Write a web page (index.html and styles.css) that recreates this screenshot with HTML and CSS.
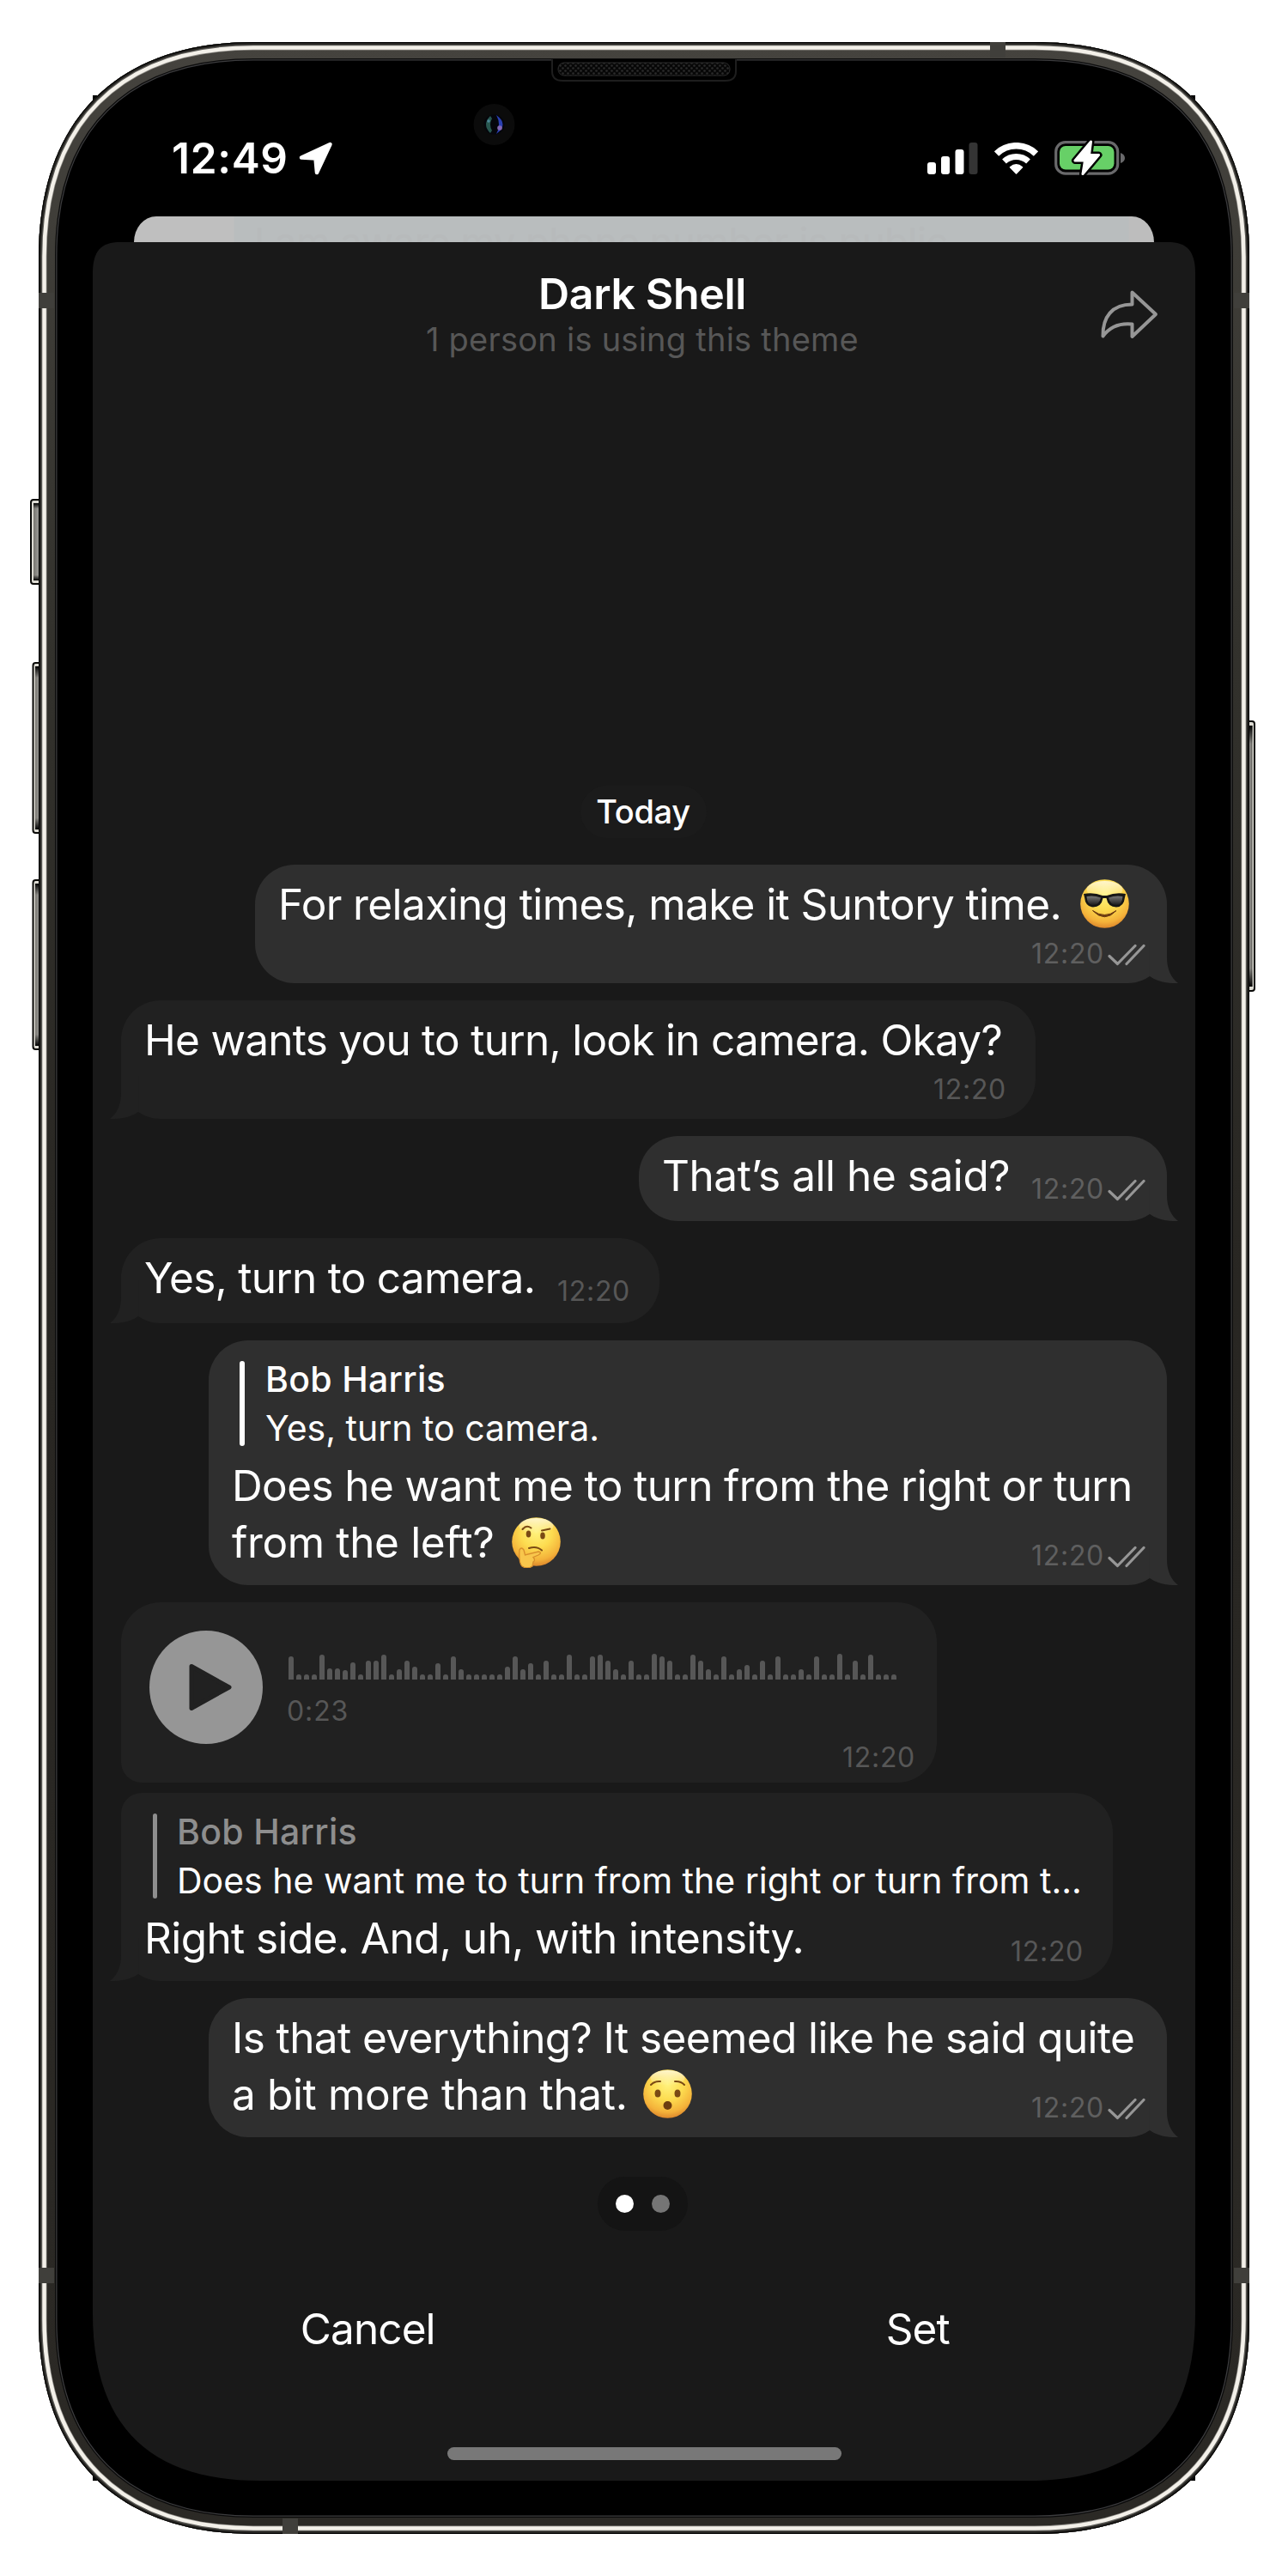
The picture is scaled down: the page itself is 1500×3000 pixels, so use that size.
FILE: index.html
```html
<!DOCTYPE html>
<html lang="en">
<head>
<meta charset="utf-8">
<title>Dark Shell</title>
<link rel="stylesheet" href="styles.css">
</head>
<body>
<svg class="defs" width="0" height="0" aria-hidden="true">
  <defs>
    <radialGradient id="face" cx="0.5" cy="0.3" r="0.72">
      <stop offset="0" stop-color="#fff27e"/>
      <stop offset="0.45" stop-color="#fddc50"/>
      <stop offset="0.8" stop-color="#f4b23a"/>
      <stop offset="1" stop-color="#d9812a"/>
    </radialGradient>
    <linearGradient id="gloss" x1="0" y1="0" x2="0" y2="1">
      <stop offset="0" stop-color="#fff" stop-opacity="0.7"/>
      <stop offset="1" stop-color="#fff" stop-opacity="0"/>
    </linearGradient>
    <linearGradient id="lens" x1="0" y1="0" x2="0" y2="1">
      <stop offset="0" stop-color="#777"/>
      <stop offset="1" stop-color="#1c1c1c"/>
    </linearGradient>
    <symbol id="checks" viewBox="0 0 44 26">
      <path d="M2 14.5 11.500 23.500 32 2.5M22 23.500 42 2.5" fill="none" stroke="#969696" stroke-width="3.2" stroke-linecap="round" stroke-linejoin="round"/>
    </symbol>
    <symbol id="tail" viewBox="0 0 36 50">
      <path d="M23 0V20C23 34 28 44 36 50C22 50.5 10 47.500 2.500 41.500V0Z" fill="currentColor"/>
    </symbol>
  </defs>
</svg>

<main class="device">
  <svg class="frame" viewBox="0 0 1500 3000" aria-hidden="true">
    <defs>
      <linearGradient id="rim" x1="0" y1="0" x2="0" y2="1">
        <stop offset="0" stop-color="#45433e"/>
        <stop offset="0.25" stop-color="#32312c"/>
        <stop offset="0.5" stop-color="#282622"/>
        <stop offset="1" stop-color="#2b2925"/>
      </linearGradient>
      <linearGradient id="key" x1="0" y1="0" x2="1" y2="0">
        <stop offset="0" stop-color="#77756f"/>
        <stop offset="0.5" stop-color="#979692"/>
        <stop offset="1" stop-color="#5a5955"/>
      </linearGradient>
      <linearGradient id="keyshade" x1="0" y1="0" x2="0" y2="1">
        <stop offset="0" stop-color="#000"/>
        <stop offset="0.07" stop-color="#000" stop-opacity="0"/>
        <stop offset="0.93" stop-color="#000" stop-opacity="0"/>
        <stop offset="1" stop-color="#000"/>
      </linearGradient>
      <pattern id="mesh" width="6" height="6" patternUnits="userSpaceOnUse">
        <rect width="6" height="6" fill="#070707"/>
        <circle cx="1.500" cy="1.500" r="1.300" fill="#2b2b2b"/>
        <circle cx="4.500" cy="4.500" r="1.300" fill="#2b2b2b"/>
      </pattern>
      <path id="shell" d="M295 49H1205C1364 49 1455 140 1455 299V2701C1455 2860 1364 2951 1205 2951H295C136 2951 45 2860 45 2701V299C45 140 136 49 295 49Z"/>
      <clipPath id="shellclip"><use href="#shell"/></clipPath>
    </defs>

    <g stroke="#0a0a08" stroke-width="2">
      <rect x="36" y="582" width="20" height="98" rx="3" fill="#dddbd3"/>
      <rect x="38.500" y="772" width="20" height="198" rx="3" fill="#dddbd3"/>
      <rect x="38.500" y="1025" width="20" height="197" rx="3" fill="#dddbd3"/>
      <rect x="1441" y="840" width="20" height="314" rx="3" fill="#dddbd3"/>
    </g>
    <g fill="url(#key)">
      <rect x="39" y="586" width="10" height="90"/>
      <rect x="41" y="776" width="8" height="190"/>
      <rect x="41" y="1029" width="8" height="189"/>
      <rect x="1452" y="845" width="6.500" height="304"/>
    </g>
    <g fill="url(#keyshade)">
      <rect x="39" y="586" width="10" height="90"/>
      <rect x="41" y="776" width="8" height="190"/>
      <rect x="41" y="1029" width="8" height="189"/>
      <rect x="1452" y="845" width="6.500" height="304"/>
    </g>

    <rect x="108" y="111" width="1284" height="2778" fill="#000"/>
    <g clip-path="url(#shellclip)">
      <use href="#shell" fill="#000" stroke="#3c3c3e" stroke-width="43"/>
      <use href="#shell" fill="none" stroke="#0b0b0b" stroke-width="40.500"/>
      <use href="#shell" fill="none" stroke="url(#rim)" stroke-width="38"/>
      <use href="#shell" fill="none" stroke="#8d8b86" stroke-width="19"/>
      <use href="#shell" fill="none" stroke="#f3f0e9" stroke-width="17.500"/>
      <use href="#shell" fill="none" stroke="#5c5b57" stroke-width="8.500"/>
      <use href="#shell" fill="none" stroke="#262522" stroke-width="6"/>
      <use href="#shell" fill="none" stroke="#000" stroke-width="2"/>
      <g fill="#403f3b">
        <rect x="45" y="341" width="18" height="18"/>
        <rect x="1437" y="341" width="18" height="18"/>
        <rect x="45" y="2641" width="18" height="18"/>
        <rect x="1437" y="2641" width="18" height="18"/>
        <rect x="1153" y="49" width="18" height="18"/>
        <rect x="329" y="2933" width="18" height="18"/>
      </g>
    </g>

    <path d="M643 69V83Q643 94 655 94H845Q857 94 857 83V69" fill="#000" stroke="#1e1e1e" stroke-width="2"/>
    <rect x="650" y="73" width="200" height="15" rx="7" fill="url(#mesh)" stroke="#2a2a2a"/>
    <circle cx="575.500" cy="145" r="24" fill="#0b0b0b"/>
    <ellipse cx="575.500" cy="145" rx="12" ry="11.500" fill="#05060c"/>
    <path d="M571 135Q561 145 571 155L573 152Q569 145 573 138Z" fill="#28564f"/>
    <path d="M578 134Q593 145 578 156Q584 145 578 134Z" fill="#2a3fb0"/>
    <circle cx="569" cy="141" r="1.800" fill="#4a8595"/>
    <circle cx="582" cy="149" r="2.800" fill="#8468b4"/>
  </svg>

  <div class="statusbar">
    <div class="status-left">
      <span class="clock">12:49</span>
      <svg width="40" height="39" viewBox="0 0 40 39"><path d="M36.500 3 3 18.500 19.500 19.500 21 36Z" fill="#fff" stroke="#fff" stroke-width="4.500" stroke-linejoin="round"/></svg>
    </div>
    <div class="status-right">
      <svg width="59" height="37" viewBox="0 0 59 37">
        <g fill="#fff"><rect y="23" width="10" height="14" rx="3"/><rect x="16" y="16" width="10" height="21" rx="3"/><rect x="32.500" y="8" width="10" height="29" rx="3"/></g>
        <rect x="48.500" width="10" height="37" rx="3" fill="#343434"/>
      </svg>
      <svg width="51" height="37" viewBox="0 0 51 37">
        <g fill="none" stroke="#fff"><path d="M2.500 13A33.200 33.200 0 0 1 48.500 13" stroke-width="7.600"/><path d="M11.500 22A20.500 20.500 0 0 1 39.500 22" stroke-width="7"/></g>
        <path d="M25.500 36 18.500 28.800Q25.500 22.800 32.500 28.800Z" fill="#fff" stroke="#fff" stroke-width="1.500" stroke-linejoin="round"/>
      </svg>
      <svg width="82" height="42" viewBox="0 0 82 42">
        <rect x="1.700" y="2.700" width="72" height="36.500" rx="11" fill="none" stroke="#69696b" stroke-width="3.200"/>
        <rect x="6" y="7" width="63.500" height="27.500" rx="7" fill="#67d067"/>
        <path d="M77 15Q82 17 82 21T77 27Z" fill="#69696b"/>
        <path d="M42.500 2 24 24 35.500 24 33 39.500 51.500 17.500 40.500 17.500Z" fill="#fff" stroke="#000" stroke-width="8" stroke-linejoin="round"/>
        <path d="M42.500 2 24 24 35.500 24 33 39.500 51.500 17.500 40.500 17.500Z" fill="#fff" stroke="#fff" stroke-width="3" stroke-linejoin="round"/>
      </svg>
    </div>
  </div>

  <div class="backcard"><span>I am aware my phone number is public</span></div>

  <section class="sheet">
    <header class="head">
      <div class="titles">
        <h1>Dark Shell</h1>
        <p>1 person is using this theme</p>
      </div>
      <svg class="share" width="67" height="57" viewBox="0 0 67 57"><path d="M36.500 2.500 64 28 36.500 54V39.500C22 38 11 42 2.500 53.500 2 31 13 16.500 36.500 16.500Z" fill="none" stroke="#969696" stroke-width="4" stroke-linejoin="round"/></svg>
    </header>

    <div class="chat">
      <div class="day">Today</div>

      <div class="bubble out m1">
        <div class="text">For relaxing times, make it Suntory time. <svg class="emoji cool" viewBox="0 0 57 57"><circle cx="28.500" cy="28.500" r="28.300" fill="url(#face)"/><ellipse cx="28.500" cy="12" rx="21" ry="10" fill="url(#gloss)"/><path d="M4 17Q16 15 26 19H31Q41 15 53 17L52 21Q51 32 42 32.500 32.500 32.500 30.500 22H26.500Q24.500 32.500 15 32.500 6 32 5 21Z" fill="#161616"/><path d="M7.500 20Q16 18.500 24 21.500 22 30 15 30 8 30 7.500 20ZM49.500 20Q41 18.500 33 21.500 35 30 42 30 49 30 49.500 20Z" fill="url(#lens)"/><path d="M14.500 36.500Q28.500 51 42 36.500 28.500 46.500 14.500 36.500Z" fill="#6b3a10" stroke="#6b3a10" stroke-linejoin="round"/></svg></div>
        <div class="meta">12:20<svg class="checks"><use href="#checks"/></svg></div>
        <svg class="tail"><use href="#tail"/></svg>
      </div>

      <div class="bubble in m2">
        <div class="text tight">He wants you to turn, look in camera. Okay?</div>
        <div class="meta">12:20</div>
        <svg class="tail"><use href="#tail"/></svg>
      </div>

      <div class="bubble out single m3">
        <div class="text">That’s all he said?</div>
        <div class="meta">12:20<svg class="checks"><use href="#checks"/></svg></div>
        <svg class="tail"><use href="#tail"/></svg>
      </div>

      <div class="bubble in single m4">
        <div class="text tight">Yes, turn to camera.</div>
        <div class="meta">12:20</div>
        <svg class="tail"><use href="#tail"/></svg>
      </div>

      <div class="bubble out m5">
        <div class="quote">
          <div class="lines"><strong>Bob Harris</strong><span>Yes, turn to camera.</span></div>
        </div>
        <div class="text">Does he want me to turn from the right or turn<br><span class="loose">from the left? </span><svg class="emoji think" viewBox="0 0 57 59"><circle cx="28.500" cy="28.500" r="28.300" fill="url(#face)"/><ellipse cx="28.500" cy="10" rx="20" ry="9" fill="url(#gloss)"/><g fill="none" stroke="#7a4a14" stroke-width="2" stroke-linecap="round"><path d="M12.500 14Q17 8.500 22.500 12.500M35 15.500 44.500 13.500M20 36Q29 33 35 38.500"/></g><ellipse cx="19.500" cy="19.500" rx="2.800" ry="4" fill="#7a4a14"/><ellipse cx="36" cy="21.500" rx="2.800" ry="4" fill="#7a4a14"/><path d="M9 38Q11 34 14 38L15.500 44 31 40Q36 41 31 44L25 46.500Q28 50 25 52L24 57Q18 61 12 57 8 53 9 38Z" fill="#f8c64c" stroke="#d88f2c" stroke-width="1.300"/></svg></div>
        <div class="meta">12:20<svg class="checks"><use href="#checks"/></svg></div>
        <svg class="tail"><use href="#tail"/></svg>
      </div>

      <div class="bubble in voice m6">
        <svg class="play" width="132" height="132" viewBox="0 0 132 132"><circle cx="66" cy="66" r="66" fill="#969696"/><path d="M49 41.500 93 66 49 90.500Z" fill="#212121" stroke="#212121" stroke-width="5" stroke-linejoin="round"/></svg>
        <div class="track">
          <svg width="708" height="30" viewBox="0 0 708 30"><path fill="none" stroke="#575757" stroke-width="6" stroke-linecap="round" d="M3 40V6M12 40V27M21 40V27M30 40V27M39 40V4M48 40V20M57 40V20M66 40V22M75 40V13M84 40V27M93 40V11M102 40V11M111 40V4M120 40V27M129 40V21M138 40V11M147 40V18M156 40V27M165 40V27M174 40V14M183 40V27M192 40V6M201 40V21M210 40V27M219 40V27M228 40V27M237 40V27M246 40V27M255 40V18M264 40V6M273 40V21M282 40V14M291 40V27M300 40V11M309 40V27M318 40V27M327 40V4M336 40V27M345 40V27M354 40V6M363 40V4M372 40V11M381 40V21M390 40V27M399 40V11M408 40V27M417 40V27M426 40V3M435 40V6M444 40V11M453 40V27M462 40V27M471 40V4M480 40V11M489 40V21M498 40V27M507 40V6M516 40V27M525 40V21M534 40V16M543 40V27M552 40V11M561 40V27M570 40V6M579 40V27M588 40V27M597 40V21M606 40V27M615 40V6M624 40V27M633 40V27M642 40V3M651 40V27M660 40V11M669 40V27M678 40V4M687 40V27M696 40V27M705 40V27"/></svg>
          <span>0:23</span>
        </div>
        <div class="meta">12:20</div>
      </div>

      <div class="bubble in m7">
        <div class="quote">
          <div class="lines"><strong>Bob Harris</strong><span>Does he want me to turn from the right or turn from t...</span></div>
        </div>
        <div class="text">Right side. And, uh, with intensity.</div>
        <div class="meta">12:20</div>
        <svg class="tail"><use href="#tail"/></svg>
      </div>

      <div class="bubble out m8">
        <div class="text">Is that everything? It seemed like he said quite<br><span class="loose">a bit more than that. </span><svg class="emoji" viewBox="0 0 57 57"><circle cx="28.500" cy="28.500" r="28.300" fill="url(#face)"/><ellipse cx="28.500" cy="10" rx="20" ry="9" fill="url(#gloss)"/><g fill="none" stroke="#7a4a14" stroke-width="2" stroke-linecap="round"><path d="M9 18Q13 13.500 20 14M48 18Q44 13.500 37 14"/></g><ellipse cx="17" cy="28" rx="3.500" ry="4.500" fill="#7a4a14"/><ellipse cx="40" cy="28" rx="3.500" ry="4.500" fill="#7a4a14"/><ellipse cx="28.500" cy="42" rx="5" ry="5" fill="#6d3c10"/></svg></div>
        <div class="meta">12:20<svg class="checks"><use href="#checks"/></svg></div>
        <svg class="tail"><use href="#tail"/></svg>
      </div>
    </div>

    <footer class="foot">
      <div class="pager"><i class="on"></i><i></i></div>
      <div class="actions"><span>Cancel</span><span>Set</span></div>
      <div class="home"></div>
    </footer>
  </section>
</main>
</body>
</html>
```
FILE: styles.css
```css
* { box-sizing: border-box; }
body { margin: 0; background: #fff; font-family: Inter, "Liberation Sans", sans-serif; color: #fff; }
svg { display: block; flex: none; }
.defs { position: absolute; }

.device { position: relative; width: 1500px; height: 3000px; padding: 111px 108px; }
.frame { position: absolute; inset: 0; width: 1500px; height: 3000px; }
.statusbar, .backcard, .sheet { position: relative; }

/* status bar */
.statusbar { height: 141px; padding: 5px 82px 0 92px; display: flex; align-items: center; justify-content: space-between; }
.status-left { display: flex; align-items: center; gap: 12px; }
.status-right { display: flex; align-items: center; gap: 19px; }
.clock { font-size: 49.5px; font-weight: 600; letter-spacing: 0.7px; line-height: 60px; }

/* card peeking from behind the sheet */
.backcard {
  height: 30px; margin: 0 48px; padding-left: 140px; overflow: hidden; white-space: nowrap;
  border-radius: 26px 26px 0 0 / 30px 30px 0 0;
  background: linear-gradient(90deg, #bfbfbf 116px, #b9bdbe 117px, #b9bdbe 1158px, #bdbdbd 1159px);
  color: #b7babb; font-size: 45px; line-height: 60px; letter-spacing: -0.35px;
}

.sheet {
  height: 2607px; display: flex; flex-direction: column; background: #191919;
  clip-path: path("M0 36C0 10 10 0 32 0H1252C1274 0 1284 10 1284 36V2412C1284 2542 1219 2607 1089 2607H195C65 2607 0 2542 0 2412Z");
}

/* header */
.head { display: grid; grid-template-columns: 1fr auto 1fr; padding: 30px 43px 0; }
.titles { grid-column: 2; padding-right: 4px; text-align: center; }
.head h1 { margin: 0; font-size: 50px; line-height: 60px; font-weight: 600; letter-spacing: -0.35px; }
.head p { margin: 0; font-size: 38px; line-height: 46px; letter-spacing: 0.24px; color: #575757; }
.share { justify-self: end; margin-top: 26px; }

/* messages */
.chat { flex: 1; display: flex; flex-direction: column; justify-content: flex-end; gap: 20px; padding: 0 33px; }
.day {
  align-self: center; width: 147px; height: 61px; margin: 0 2px 11px 0; border-radius: 31px; background: #1b1b1b;
  text-align: center; font-size: 38px; line-height: 61px; font-weight: 500; letter-spacing: -0.35px;
}
.bubble {
  position: relative; display: grid; grid-template-rows: auto 1fr; padding-left: 27px;
  border-radius: 46px; color: #2f2f2f;
}
.out { align-self: flex-end; background: #2f2f2f; }
.in { align-self: flex-start; background: #212121; color: #212121; }
.text {
  grid-area: 2 / 1; padding-top: 13px; color: #fff; white-space: nowrap;
  font-size: 49.5px; line-height: 66px; letter-spacing: -0.6px;
}
.tight { letter-spacing: -0.73px; }
.loose { letter-spacing: -0.35px; }
.meta {
  grid-area: 2 / 1; align-self: end; justify-self: end; display: flex; gap: 4px;
  margin: 0 25px 18.5px 0; color: #5f5f5f; font-size: 32px; line-height: 32px; letter-spacing: 0.7px;
}
.in .meta { margin-right: 34px; color: #575757; }
.single .meta { margin-bottom: 21.5px; }
.checks { width: 44px; height: 26px; margin-top: 4px; }
.tail { position: absolute; right: -13px; bottom: 0; width: 36px; height: 50px; }
.in .tail { right: auto; left: -13px; transform: scaleX(-1); }
.emoji { display: inline-block; width: 57px; height: 57px; margin-left: 5px; vertical-align: -10px; }
.cool { margin-left: 8px; }
.think { height: 59px; margin-left: 7px; vertical-align: -12px; }

.quote { grid-area: 1 / 1; height: 99px; margin: 24px 0 0 9px; display: flex; align-items: center; gap: 24px; }
.quote::before { content: ""; width: 6px; height: 99px; border-radius: 3px; background: #fff; }
.lines { display: flex; flex-direction: column; color: #fff; font-size: 41px; line-height: 57px; white-space: nowrap; }
.lines strong { font-weight: 500; letter-spacing: 0.3px; }
.in .quote { margin-left: 10px; gap: 23px; }
.in .quote::before { width: 5px; background: #8e8e8e; }
.in .lines strong { color: #8e8e8e; }

.m1 { width: 1062px; height: 138px; }
.m2 { width: 1065px; height: 138px; }
.m3 { width: 615px; height: 99px; }
.m3 .text { letter-spacing: -0.45px; }
.m4 { width: 627px; height: 99px; }
.m5 { width: 1116px; height: 285px; }
.m6 { width: 950px; height: 210px; margin-bottom: -8px; border-bottom-left-radius: 24px; }
.m7 { width: 1155px; height: 219px; border-top-left-radius: 24px; }
.m8 { width: 1116px; height: 162px; }

.voice { grid-template: 1fr / 132px 1fr; column-gap: 30px; padding-left: 33px; }
.play { margin-top: 33px; }
.track { grid-area: 1 / 2; padding-top: 60px; display: flex; flex-direction: column; gap: 21px; color: #575757; font-size: 32px; line-height: 32px; letter-spacing: 0.9px; }
.track span { margin-left: -2px; }
.voice .meta { grid-area: 1 / 2; margin: 0 25px 13.5px 0; }

/* footer */
.foot { height: 400px; padding: 46px 0 24px; display: flex; flex-direction: column; }
.pager { align-self: center; width: 105px; height: 63px; margin-right: 3px; border-radius: 32px; background: #141414; display: flex; align-items: center; justify-content: center; gap: 21px; }
.pager i { width: 21px; height: 21px; border-radius: 50%; background: #757575; }
.pager .on { background: #fff; }
.actions { display: grid; grid-template-columns: 1fr 1fr; margin: 84px 3px 0 0; text-align: center; font-size: 49.5px; line-height: 60px; letter-spacing: -0.9px; }
.home { align-self: center; width: 459px; height: 15px; margin-top: auto; border-radius: 8px; background: #787878; }
```
